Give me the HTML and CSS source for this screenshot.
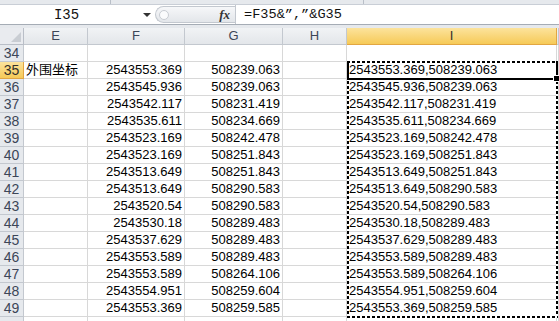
FILE: index.html
```html
<!DOCTYPE html>
<html lang="zh-CN">
<head>
  <meta charset="UTF-8" />
  <title>Excel</title>
  <link rel="stylesheet" href="styles.css">
</head>
<body>
  <div class="topstrip">
    <span class="div1"></span>
    <span class="div2"></span>
  </div>

  <div class="formulabar">
    <div class="namebox">
      <span class="name">I35</span>
      <span class="arrow"></span>
    </div>
    <div class="grip">
      <span class="knob"></span>
      <span class="fx">fx</span>
    </div>
    <div class="formula">=F35&amp;”,”&amp;G35</div>
  </div>

  <div class="gap"></div>

  <div class="sheet">
    <div class="corner"><span class="tri"></span></div>
    <div class="ch">E</div><div class="ch">F</div><div class="ch">G</div><div class="ch">H</div><div class="ch sel">I</div><div class="ch"></div>

    <div class="rh">34</div><div class="c"></div><div class="c"></div><div class="c"></div><div class="c"></div><div class="c"></div><div class="c"></div>

    <div class="rh sel">35</div><div class="c t">外围坐标</div><div class="c n">2543553.369</div><div class="c n">508239.063</div><div class="c"></div><div class="c t">2543553.369,508239.063</div><div class="c"></div>
    <div class="rh">36</div><div class="c"></div><div class="c n">2543545.936</div><div class="c n">508239.063</div><div class="c"></div><div class="c t">2543545.936,508239.063</div><div class="c"></div>
    <div class="rh">37</div><div class="c"></div><div class="c n">2543542.117</div><div class="c n">508231.419</div><div class="c"></div><div class="c t">2543542.117,508231.419</div><div class="c"></div>
    <div class="rh">38</div><div class="c"></div><div class="c n">2543535.611</div><div class="c n">508234.669</div><div class="c"></div><div class="c t">2543535.611,508234.669</div><div class="c"></div>
    <div class="rh">39</div><div class="c"></div><div class="c n">2543523.169</div><div class="c n">508242.478</div><div class="c"></div><div class="c t">2543523.169,508242.478</div><div class="c"></div>
    <div class="rh">40</div><div class="c"></div><div class="c n">2543523.169</div><div class="c n">508251.843</div><div class="c"></div><div class="c t">2543523.169,508251.843</div><div class="c"></div>
    <div class="rh">41</div><div class="c"></div><div class="c n">2543513.649</div><div class="c n">508251.843</div><div class="c"></div><div class="c t">2543513.649,508251.843</div><div class="c"></div>
    <div class="rh">42</div><div class="c"></div><div class="c n">2543513.649</div><div class="c n">508290.583</div><div class="c"></div><div class="c t">2543513.649,508290.583</div><div class="c"></div>
    <div class="rh">43</div><div class="c"></div><div class="c n">2543520.54</div><div class="c n">508290.583</div><div class="c"></div><div class="c t">2543520.54,508290.583</div><div class="c"></div>
    <div class="rh">44</div><div class="c"></div><div class="c n">2543530.18</div><div class="c n">508289.483</div><div class="c"></div><div class="c t">2543530.18,508289.483</div><div class="c"></div>
    <div class="rh">45</div><div class="c"></div><div class="c n">2543537.629</div><div class="c n">508289.483</div><div class="c"></div><div class="c t">2543537.629,508289.483</div><div class="c"></div>
    <div class="rh">46</div><div class="c"></div><div class="c n">2543553.589</div><div class="c n">508289.483</div><div class="c"></div><div class="c t">2543553.589,508289.483</div><div class="c"></div>
    <div class="rh">47</div><div class="c"></div><div class="c n">2543553.589</div><div class="c n">508264.106</div><div class="c"></div><div class="c t">2543553.589,508264.106</div><div class="c"></div>
    <div class="rh">48</div><div class="c"></div><div class="c n">2543554.951</div><div class="c n">508259.604</div><div class="c"></div><div class="c t">2543554.951,508259.604</div><div class="c"></div>
    <div class="rh">49</div><div class="c"></div><div class="c n">2543553.369</div><div class="c n">508259.585</div><div class="c"></div><div class="c t">2543553.369,508259.585</div><div class="c"></div>
    <div class="rh"></div><div class="c"></div><div class="c"></div><div class="c"></div><div class="c"></div><div class="c"></div><div class="c"></div>

    <div class="marquee"></div>
    <div class="active"><span class="handle"></span></div>
  </div>
</body>
</html>
```

FILE: styles.css
```css
body {
  margin: 0;
  width: 559px;
  height: 321px;
  overflow: hidden;
  background: #fff;
  font-family: "Liberation Sans", Arial, sans-serif;
}

.topstrip {
  height: 4px;
  background: #e6e9ed;
  border-bottom: 1px solid #c9ced6;
  position: relative;
}
.topstrip span {
  position: absolute;
  top: 0;
  width: 1px;
  height: 4px;
  background: #b9bfc8;
}
.div1 { left: 110px; }
.div2 { left: 363px; }

.formulabar {
  display: flex;
  height: 19px;
  background: #fff;
  border-bottom: 1px solid #a5acb5;
}
.namebox {
  width: 155px;
  display: flex;
  align-items: center;
}
.name {
  flex: 1;
  text-align: center;
  font-family: "Liberation Mono", monospace;
  font-size: 14px;
  color: #111;
  padding-right: 10px;
}
.arrow {
  width: 0;
  height: 0;
  border-left: 4px solid transparent;
  border-right: 4px solid transparent;
  border-top: 4px solid #333;
  margin-right: 4px;
}
.grip {
  width: 80px;
  margin: 1px 0;
  background: linear-gradient(#f6f7f9, #e3e6ea);
  border: 1px solid #c3c8cf;
  border-right: none;
  border-radius: 9px 0 0 9px;
  display: flex;
  align-items: center;
  justify-content: space-between;
  box-sizing: border-box;
}
.knob {
  width: 8px;
  height: 8px;
  border-radius: 50%;
  background: #fafbfc;
  border: 1px solid #c8ccd2;
  margin-left: 3px;
}
.fx {
  font-family: "Liberation Serif", serif;
  font-style: italic;
  font-weight: bold;
  font-size: 13px;
  color: #333;
  margin-right: 5px;
}
.formula {
  flex: 1;
  border-left: 1px solid #c3c8cf;
  padding-left: 8px;
  font-family: "Liberation Mono", monospace;
  font-size: 13.6px;
  line-height: 19px;
  color: #111;
}

.gap {
  height: 3px;
  background: #e6e9ed;
}

.sheet {
  position: relative;
  display: grid;
  grid-template-columns: 24px 64px 97px 98px 64px 210px 2px;
  grid-auto-rows: 17px;
  font-size: 13px;
}
.sheet > div {
  box-sizing: border-box;
  border-right: 1px solid #d8d8d8;
  border-bottom: 1px solid #d8d8d8;
  white-space: nowrap;
  overflow: hidden;
  line-height: 16px;
}
.sheet > .corner {
  background: #e9ebef;
  border-color: #b9bec7;
  position: relative;
}
.tri {
  position: absolute;
  right: 2px;
  bottom: 2px;
  width: 0;
  height: 0;
  border-left: 10px solid transparent;
  border-bottom: 10px solid #c9cdd3;
}
.sheet > .ch {
  background: linear-gradient(#f1f3f5, #e3e6ea);
  border-color: #c3c8cf;
  text-align: center;
  color: #3c4658;
}
.sheet > .rh {
  background: #e6e9ed;
  border-color: #c3c8cf;
  text-align: center;
  color: #3c4658;
  font-size: 14px;
}
.sheet > .sel {
  background: linear-gradient(#fce39c, #f6ca58);
  border-color: #e2a642;
  color: #33302a;
}
.sheet > .n {
  text-align: right;
  padding-right: 2px;
  color: #000;
}
.sheet > .t {
  padding-left: 2px;
  color: #000;
  font-family: "Liberation Sans", "Noto Sans CJK SC", sans-serif;
}

.sheet > .marquee {
  position: absolute;
  left: 347px;
  top: 33px;
  width: 211px;
  height: 257px;
  border: none;
  background:
    repeating-linear-gradient(90deg, #000 0 3px, #fff 3px 5px) top / 100% 2px no-repeat,
    repeating-linear-gradient(90deg, #000 0 3px, #fff 3px 5px) bottom / 100% 2px no-repeat,
    repeating-linear-gradient(180deg, #000 0 3px, #fff 3px 5px) left / 2px 100% no-repeat,
    repeating-linear-gradient(180deg, #000 0 3px, #fff 3px 5px) right / 2px 100% no-repeat;
}
.sheet > .active {
  position: absolute;
  left: 347px;
  top: 33px;
  width: 211px;
  height: 19px;
  border: 2px solid #000;
  border-top: none;
  overflow: visible;
}
.handle {
  position: absolute;
  right: -4px;
  bottom: -4px;
  width: 5px;
  height: 5px;
  background: #000;
  border: 1px solid #fff;
}
```
